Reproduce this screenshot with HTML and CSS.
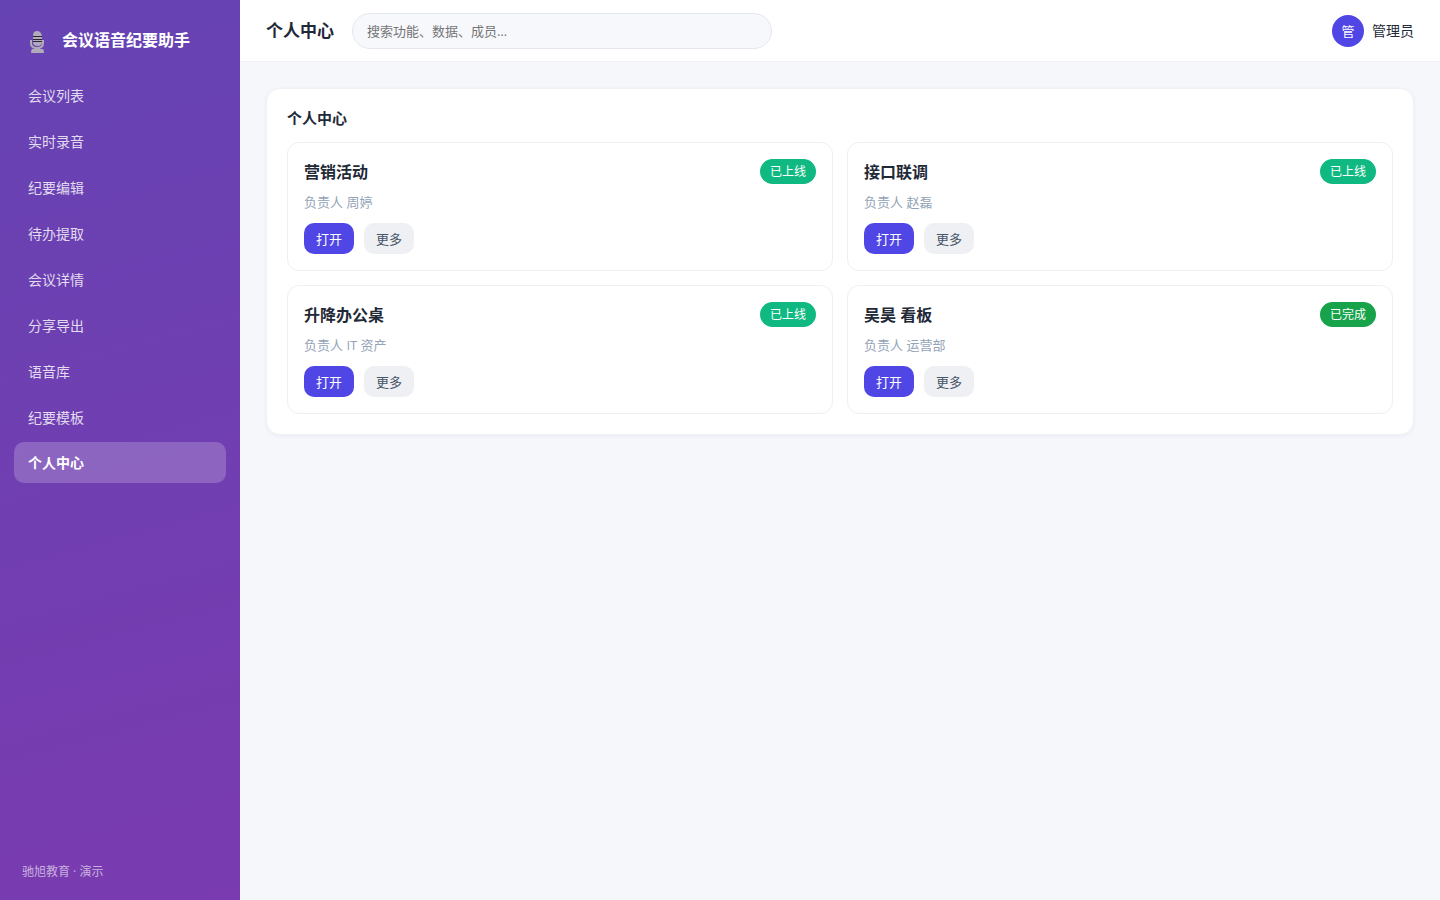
FILE: index.html
```html
<!DOCTYPE html>
<html lang="zh-CN">

<head>
    <meta charset="UTF-8">
    <meta name="viewport" content="width=device-width, initial-scale=1">
    <title>会议语音纪要助手</title>
    <link rel="stylesheet" href="styles.css">
</head>

<body>
    <div class="app">
        <aside class="sidebar">
            <div class="brand">
                <svg class="brand-icon" viewBox="0 0 22 26" aria-hidden="true">
                    <path fill="none" stroke="#b0aab9" stroke-width="2" d="M5 13v3q0 5 6 5t6-5v-3"/>
                    <path fill="#b0aab9" d="M7 9q0-5 4-5t5 5v6q0 4-4.500 4T7 15z"/>
                    <path fill="#b0aab9" d="M9 21h5v1h3q1 1 1 4H5q0-3 1-4h3z"/>
                    <path stroke="#292532" d="M7 9.500h9M7 12.500h9M7 14.500h9"/>
                </svg>
                <span>会议语音纪要助手</span>
            </div>
            <nav class="nav">
                <a href="#">会议列表</a>
                <a href="#">实时录音</a>
                <a href="#">纪要编辑</a>
                <a href="#">待办提取</a>
                <a href="#">会议详情</a>
                <a href="#">分享导出</a>
                <a href="#">语音库</a>
                <a href="#">纪要模板</a>
                <a href="#" class="active" aria-current="page">个人中心</a>
            </nav>
            <div class="sidebar-foot">驰旭教育 · 演示</div>
        </aside>

        <div class="main">
            <header class="topbar">
                <h1>个人中心</h1>
                <input class="search" type="search" placeholder="搜索功能、数据、成员…" aria-label="搜索">
                <div class="user">
                    <span class="avatar">管</span>
                    <span>管理员</span>
                </div>
            </header>

            <main class="content">
                <section class="panel">
                    <h2>个人中心</h2>
                    <div class="grid">
                        <article class="card">
                            <div class="card-head">
                                <h3>营销活动</h3>
                                <span class="tag">已上线</span>
                            </div>
                            <p>负责人 周婷</p>
                            <div class="actions">
                                <button type="button" class="btn primary">打开</button>
                                <button type="button" class="btn">更多</button>
                            </div>
                        </article>
                        <article class="card">
                            <div class="card-head">
                                <h3>接口联调</h3>
                                <span class="tag">已上线</span>
                            </div>
                            <p>负责人 赵磊</p>
                            <div class="actions">
                                <button type="button" class="btn primary">打开</button>
                                <button type="button" class="btn">更多</button>
                            </div>
                        </article>
                        <article class="card">
                            <div class="card-head">
                                <h3>升降办公桌</h3>
                                <span class="tag">已上线</span>
                            </div>
                            <p>负责人 IT 资产</p>
                            <div class="actions">
                                <button type="button" class="btn primary">打开</button>
                                <button type="button" class="btn">更多</button>
                            </div>
                        </article>
                        <article class="card">
                            <div class="card-head">
                                <h3>吴昊 看板</h3>
                                <span class="tag done">已完成</span>
                            </div>
                            <p>负责人 运营部</p>
                            <div class="actions">
                                <button type="button" class="btn primary">打开</button>
                                <button type="button" class="btn">更多</button>
                            </div>
                        </article>
                    </div>
                </section>
            </main>
        </div>
    </div>
</body>

</html>
```
FILE: styles.css
```css
* {
    margin: 0;
    padding: 0;
    box-sizing: border-box;
}

body {
    font-family: "Open Sans", "Noto Sans CJK SC", sans-serif;
    font-size: 14px;
    line-height: 22px;
    color: #1f2937;
    background: #f5f7fb;
}

button,
input {
    font-family: inherit;
}

.app {
    display: flex;
    min-height: 100vh;
}

/* sidebar */
.sidebar {
    display: flex;
    flex-direction: column;
    flex: 0 0 240px;
    padding: 18px 14px;
    background: linear-gradient(165deg, #6643b3, #7a3bb0);
    color: #fff;
}

.brand {
    display: flex;
    align-items: center;
    gap: 14px;
    height: 44px;
    padding: 0 12px;
    margin-bottom: 12px;
    font-size: 16px;
    font-weight: 700;
}

.brand-icon {
    width: 22px;
    height: 26px;
}

.nav {
    display: flex;
    flex-direction: column;
    gap: 4px;
}

.nav a {
    padding: 11px 14px 9px;
    border-radius: 10px;
    color: rgba(255, 255, 255, .82);
    text-decoration: none;
}

.nav .active {
    padding: 10px 14px;
    line-height: 21px;
    background: rgba(255, 255, 255, .2);
    color: #fff;
    font-weight: 700;
}

.sidebar-foot {
    margin-top: auto;
    padding: 0 8px;
    font-size: 12px;
    line-height: 20px;
    color: rgba(255, 255, 255, .6);
}

/* top bar */
.main {
    flex: 1;
    min-width: 0;
}

.topbar {
    display: flex;
    align-items: center;
    gap: 18px;
    height: 62px;
    padding: 0 26px;
    background: #fff;
    border-bottom: 1px solid #eef0f4;
}

.topbar h1 {
    font-size: 17px;
}

.search {
    flex: 0 1 420px;
    min-width: 0;
    height: 36px;
    padding: 0 14px;
    border: 1px solid #e5e7ef;
    border-radius: 18px;
    background: #f7f8fc;
    font-size: 13px;
    appearance: none;
}

.search::placeholder {
    color: #757575;
}

.user {
    display: flex;
    align-items: center;
    gap: 8px;
    margin-left: auto;
}

.avatar {
    width: 32px;
    height: 32px;
    border-radius: 50%;
    background: #4f46e5;
    color: #fff;
    font-size: 13px;
    line-height: 32px;
    text-align: center;
}

/* content */
.content {
    padding: 26px;
}

.panel {
    padding: 20px;
    border: 1px solid #f0f1f5;
    border-radius: 14px;
    background: #fff;
    box-shadow: 0 1px 4px rgba(30, 41, 90, .05);
}

.panel h2 {
    margin-bottom: 14px;
    font-size: 15px;
    line-height: 19px;
}

.grid {
    display: grid;
    grid-template-columns: repeat(2, 1fr);
    gap: 14px;
}

.card {
    padding: 16px;
    border: 1px solid #eeeff2;
    border-radius: 12px;
}

.card-head {
    display: flex;
    align-items: center;
    justify-content: space-between;
}

.card h3 {
    font-size: 16px;
}

.tag {
    padding: 0 10px;
    border-radius: 13px;
    background: #10b981;
    color: #fff;
    font-size: 12px;
    line-height: 25px;
}

.tag.done {
    background: #16a34a;
}

.card p {
    margin: 8px 0 10px;
    font-size: 13px;
    line-height: 21px;
    color: #94a3b8;
}

.actions {
    display: flex;
    gap: 10px;
}

.btn {
    height: 31px;
    padding: 0 12px 1px;
    border: 0;
    border-radius: 10px;
    background: #eef0f4;
    color: #475569;
    font-size: 13px;
    cursor: pointer;
}

.btn.primary {
    background: #4f46e5;
    color: #fff;
}
```
